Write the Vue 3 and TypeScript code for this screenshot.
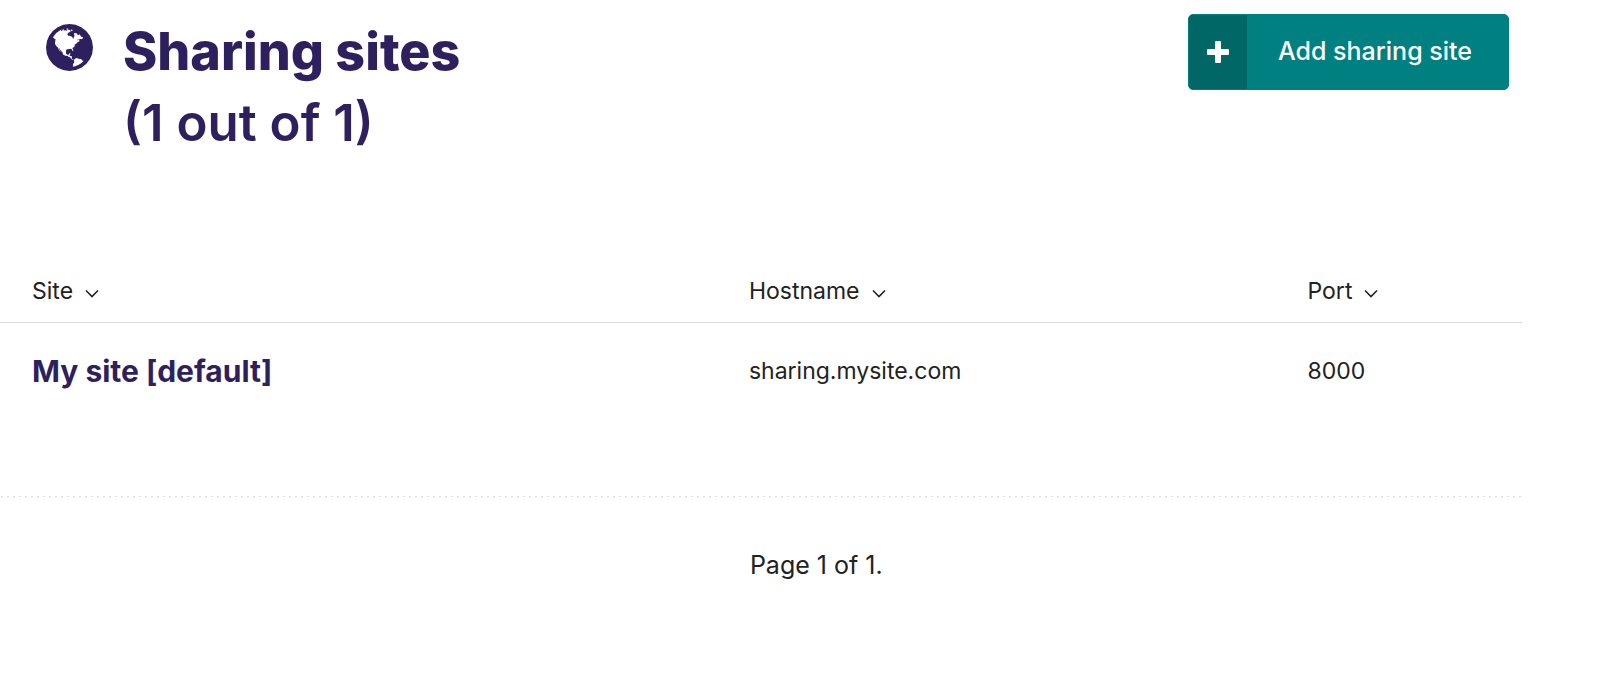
<script setup lang="ts">
interface SharingSite {
  name: string
  hostname: string
  port: number
}

const columns: string[] = ['Site', 'Hostname', 'Port']
const sites: SharingSite[] = [
  { name: 'My site [default]', hostname: 'sharing.mysite.com', port: 8000 },
]
</script>

<template>
  <main class="page">
    <header class="header">
      <svg class="globe" viewBox="128 128 1536 1536" aria-hidden="true">
        <path d="M896 128q209 0 385.5 103t279.5 279.5 103 385.5-103 385.5-279.5 279.5-385.5 103-385.5-103-279.5-279.5-103-385.5 103-385.5 279.5-279.5 385.5-103zm274 521q-2 1-9.5 9.5t-13.5 9.5q2 0 4.5-5t5-11 3.5-7q6-7 22-15 14-6 52-12 34-8 51 11-2-2 9.5-13t14.5-12q3-2 15-4.5t15-7.5l2-22q-12 1-17.5-7t-6.5-21q0 2-6 8 0-7-4.5-8t-11.5 1-9 1q-10-3-15-7.5t-8-16.5-4-15q-2-5-9.5-11t-9.5-10q-1-2-2.5-5.5t-3-6.5-4-5.5-5.5-2.5-7 5-7.5 10-4.5 5q-3-2-6-1.5t-4.5 1-4.5 3-5 3.5q-3 2-8.5 3t-8.5 2q15-5-1-11-10-4-16-3 9-4 7.5-12t-8.5-14h5q-1-4-8.5-8.5t-17.5-8.5-13-6q-8-5-34-9.5t-33-.5q-5 6-4.5 10.5t4 14 3.5 12.5q1 6-5.5 13t-6.5 12q0 7 14 15.5t10 21.5q-3 8-16 16t-16 12q-5 8-1.5 18.5t10.5 16.5q2 2 1.5 4t-3.5 4.5-5.5 4-6.5 3.5l-3 2q-11 5-20.5-6t-13.5-26q-7-25-16-30-23-8-29 1-5-13-41-26-25-9-58-4 6-1 0-15-7-15-19-12 3-6 4-17.5t1-13.5q3-13 12-23 1-1 7-8.5t9.5-13.5.5-6q35 4 50-11 5-5 11.5-17t10.5-17q9-6 14-5.5t14.5 5.5 14.5 5q14 1 15.5-11t-7.5-20q12 1 3-17-4-7-8-9-12-4-27 5-8 4 2 8-1-1-9.5 10.5t-16.5 17.5-16-5q-1-1-5.5-13.5t-9.5-13.5q-8 0-16 15 3-8-11-15t-24-8q19-12-8-27-7-4-20.5-5t-19.5 4q-5 7-5.5 11.5t5 8 10.5 5.5 11.5 4 8.5 3q14 10 8 14-2 1-8.5 3.5t-11.5 4.5-6 4q-3 4 0 14t-2 14q-5-5-9-17.5t-7-16.5q7 9-25 6l-10-1q-4 0-16 2t-20.5 1-13.5-8q-4-8 0-20 1-4 4-2-4-3-11-9.5t-10-8.5q-46 15-94 41 6 1 12-1 5-2 13-6.5t10-5.5q34-14 42-7l5-5q14 16 20 25-7-4-30-1-20 6-22 12 7 12 5 18-4-3-11.5-10t-14.5-11-15-5q-16 0-22 1-146 80-235 222 7 7 12 8 4 1 5 9t2.5 11 11.5-3q9 8 3 19 1-1 44 27 19 17 21 21 3 11-10 18-1-2-9-9t-9-4q-3 5 .5 18.5t10.5 12.5q-7 0-9.5 16t-2.5 35.5-1 23.5l2 1q-3 12 5.5 34.5t21.5 19.5q-13 3 20 43 6 8 8 9 3 2 12 7.5t15 10 10 10.5q4 5 10 22.5t14 23.5q-2 6 9.5 20t10.5 23q-1 0-2.5 1t-2.5 1q3 7 15.5 14t15.5 13q1 3 2 10t3 11 8 2q2-20-24-62-15-25-17-29-3-5-5.5-15.5t-4.5-14.5q2 0 6 1.5t8.5 3.5 7.5 4 2 3q-3 7 2 17.5t12 18.5 17 19 12 13q6 6 14 19.5t0 13.5q9 0 20 10.5t17 19.5q5 8 8 26t5 24q2 7 8.5 13.5t12.5 9.5l16 8 13 7q5 2 18.5 10.5t21.5 11.5q10 4 16 4t14.5-2.5 13.5-3.5q15-2 29 15t21 21q36 19 55 11-2 1 .5 7.5t8 15.5 9 14.5 5.5 8.5q5 6 18 15t18 15q6-4 7-9-3 8 7 20t18 10q14-3 14-32-31 15-49-18 0-1-2.5-5.5t-4-8.5-2.5-8.5 0-7.5 5-3q9 0 10-3.5t-2-12.5-4-13q-1-8-11-20t-12-15q-5 9-16 8t-16-9q0 1-1.5 5.5t-1.5 6.5q-13 0-15-1 1-3 2.5-17.5t3.5-22.5q1-4 5.5-12t7.5-14.5 4-12.5-4.5-9.5-17.5-2.5q-19 1-26 20-1 3-3 10.5t-5 11.5-9 7q-7 3-24 2t-24-5q-13-8-22.5-29t-9.5-37q0-10 2.5-26.5t3-25-5.5-24.5q3-2 9-9.5t10-10.5q2-1 4.5-1.5t4.5 0 4-1.5 3-6q-1-1-4-3-3-3-4-3 7 3 28.5-1.5t27.5 1.5q15 11 22-2 0-1-2.5-9.5t-.5-13.5q5 27 29 9 3 3 15.5 5t17.5 5q3 2 7 5.5t5.5 4.5 5-.5 8.5-6.5q10 14 12 24 11 40 19 44 7 3 11 2t4.5-9.5 0-14-1.5-12.5l-1-8v-18l-1-8q-15-3-18.5-12t1.5-18.5 15-18.5q1-1 8-3.5t15.5-6.5 12.5-8q21-19 15-35 7 0 11-9-1 0-5-3t-7.5-5-4.5-2q9-5 2-16 5-3 7.5-11t7.5-10q9 12 21 2 8-8 1-16 5-7 20.5-10.5t18.5-9.5q7 2 8-2t1-12 3-12q4-5 15-9t13-5l17-11q3-4 0-4 18 2 31-11 10-11-6-20 3-6-3-9.5t-15-5.5q3-1 11.5-.5t10.5-1.5q15-10-7-16-17-5-43 12zm-163 877q206-36 351-189-3-3-12.5-4.5t-12.5-3.5q-18-7-24-8 1-7-2.5-13t-8-9-12.5-8-11-7q-2-2-7-6t-7-5.5-7.5-4.5-8.5-2-10 1l-3 1q-3 1-5.5 2.5t-5.5 3-4 3 0 2.5q-21-17-36-22-5-1-11-5.5t-10.5-7-10-1.5-11.5 7q-5 5-6 15t-2 13q-7-5 0-17.5t2-18.5q-3-6-10.5-4.5t-12 4.5-11.5 8.5-9 6.5-8.5 5.5-8.5 7.5q-3 4-6 12t-5 11q-2-4-11.5-6.5t-9.5-5.5q2 10 4 35t5 38q7 31-12 48-27 25-29 40-4 22 12 26 0 7-8 20.5t-7 21.5q0 6 2 16z" />
      </svg>
      <h1 class="title">
        Sharing sites
        <span class="count">(1 out of 1)</span>
      </h1>
      <a class="add" href="#add">
        <span class="add-icon">
          <svg class="plus" viewBox="0 0 22 22" aria-hidden="true">
            <path d="M9 0h4q1 0 1 1v7h7q1 0 1 1v4q0 1-1 1h-7v7q0 1-1 1H9q-1 0-1-1v-7H1q-1 0-1-1V9q0-1 1-1h7V1q0-1 1-1z" />
          </svg>
        </span>
        <span class="add-label">Add sharing site</span>
      </a>
    </header>

    <table class="listing">
      <thead>
        <tr>
          <th v-for="column in columns" :key="column" scope="col">
            <a class="sort" href="#sort">
              {{ column }}
              <svg class="chevron" viewBox="0 0 14 9" aria-hidden="true">
                <path d="M1 1.5l6 6 6-6" />
              </svg>
            </a>
          </th>
        </tr>
      </thead>
      <tbody>
        <tr v-for="site in sites" :key="site.hostname">
          <td><a class="site" href="#site">{{ site.name }}</a></td>
          <td>{{ site.hostname }}</td>
          <td>{{ site.port }}</td>
        </tr>
      </tbody>
    </table>

    <nav class="pagination" aria-label="Pagination">
      <p>Page 1 of 1.</p>
    </nav>
  </main>
</template>

<style>
body {
  margin: 0;
  background: #fff;
}
</style>

<style scoped>
.page {
  padding-right: 78px;
  font-family: Inter, "Liberation Sans", sans-serif;
  font-size: 23px;
  line-height: 32px;
  color: #222;
}

.header {
  display: flex;
  align-items: flex-start;
  padding: 14px 13px 0 46px;
}

.globe {
  width: 47px;
  height: 47px;
  margin-top: 10px;
  fill: #2e1f5e;
}

.title {
  flex: 1;
  margin: 2px 0 0 30px;
  font-size: 52px;
  line-height: 71px;
  font-weight: 800;
  color: #2e1f5e;
}

.count {
  display: block;
  font-size: 51px;
  font-weight: 600;
}

.add {
  display: flex;
  box-sizing: border-box;
  height: 76px;
  border: 1px solid #008080;
  border-radius: 5px;
  overflow: hidden;
  background: #008080;
  color: #fff;
  font-size: 25px;
  font-weight: 500;
  text-decoration: none;
}

.add-icon {
  display: flex;
  align-items: center;
  justify-content: center;
  width: 58px;
  background: #006666;
}

.plus {
  width: 22px;
  height: 22px;
  fill: #fff;
}

.add-label {
  align-self: center;
  padding: 0 36px 2px 31px;
}

.listing {
  width: 100%;
  margin-top: 117px;
  table-layout: fixed;
  border-collapse: collapse;
}

th,
td {
  padding: 0 0 0 32px;
  text-align: left;
  vertical-align: top;
  font-weight: 400;
}

th {
  padding-bottom: 15px;
  border-bottom: 1px solid #dadada;
}

th:nth-child(1) {
  width: 45%;
}

th:nth-child(2) {
  width: 34.6%;
}

td {
  height: 142px;
  padding-top: 32px;
}

tbody tr {
  background: repeating-linear-gradient(90deg, transparent 0 1px, #dadada 1px 3px, transparent 3px 6px) left bottom / 100% 1px no-repeat;
}

.sort {
  display: inline-flex;
  align-items: center;
  gap: 12px;
  color: inherit;
  text-decoration: none;
}

.chevron {
  width: 14px;
  height: 9px;
  margin-top: 5px;
  fill: none;
  stroke: #222;
  stroke-width: 1.6;
}

.site {
  font-size: 30px;
  font-weight: 700;
  color: #2e1f5e;
  text-decoration: none;
}

.pagination {
  padding: 52px 0 0 calc(45% + 65px);
  font-size: 25px;
}

.pagination p {
  margin: 0;
}
</style>
